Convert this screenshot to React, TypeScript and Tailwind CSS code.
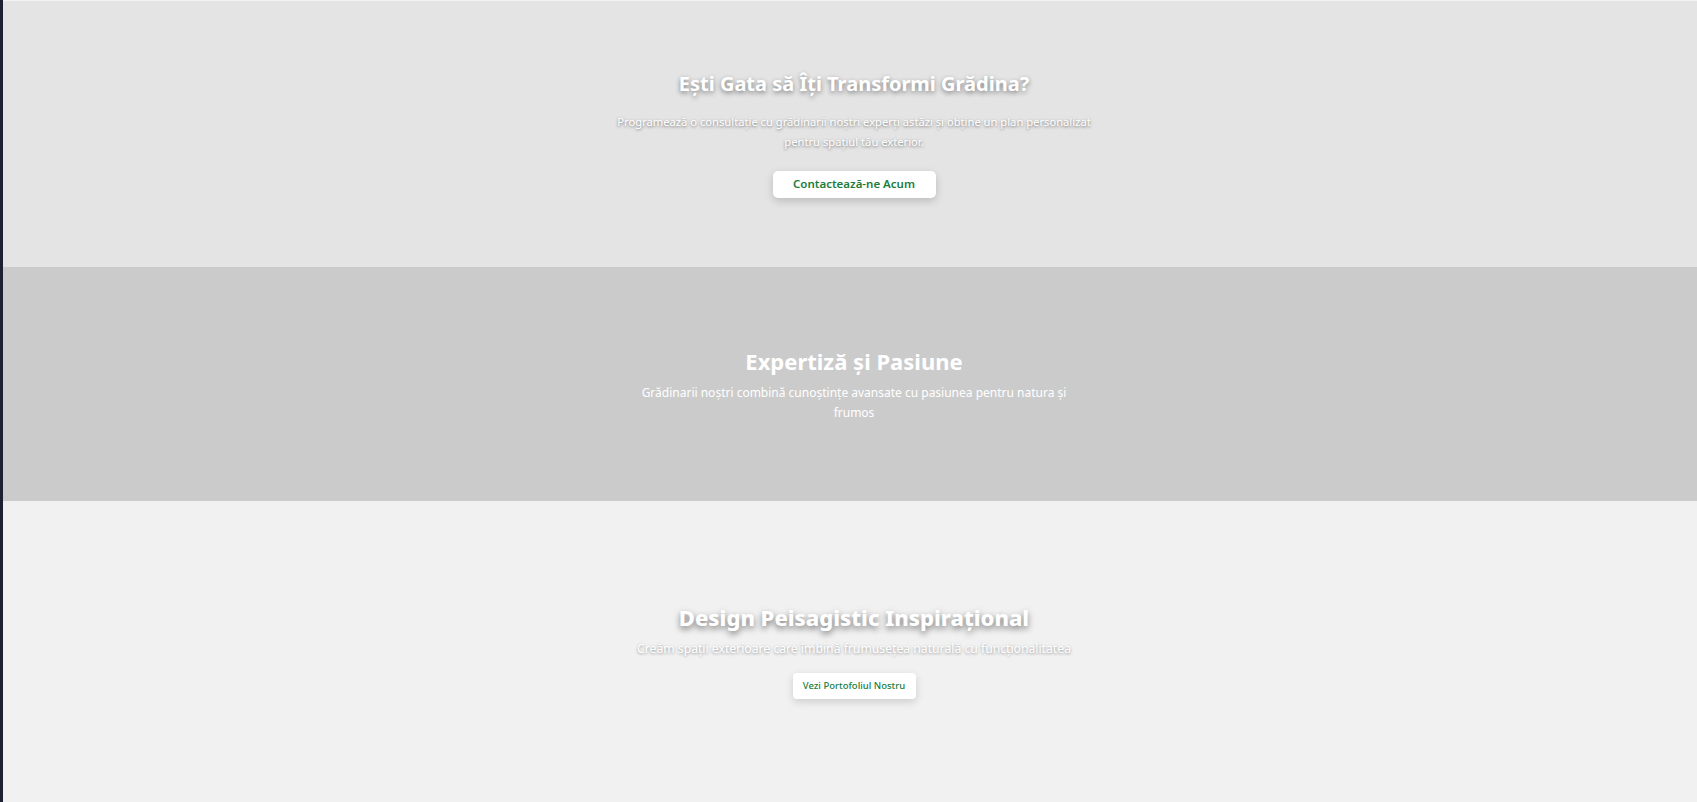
const font = { fontFamily: '"Noto Sans", "Open Sans", sans-serif' }

function CtaSection() {
  return (
    <section className="flex h-[267px] flex-col items-center justify-center border-t border-[#f4f4f4] bg-[#e4e4e4] pb-[3px] pl-2 text-center">
      <h2 className="text-[20px] font-bold leading-8 text-white [text-shadow:0_2px_5px_rgba(0,0,0,0.45)]">
        Ești Gata să Îți Transformi Grădina?
      </h2>
      <p className="mt-3 max-w-[490px] text-[11.2px] leading-5 text-white [text-shadow:0_1px_3px_rgba(0,0,0,0.5)]">
        Programează o consultație cu grădinarii noștri experți astăzi și obține un plan personalizat
        pentru spațiul tău exterior.
      </p>
      <button
        type="button"
        className="mt-[19px] h-[27px] w-[163px] rounded-[5px] bg-white text-[11.5px] font-semibold text-[#1a7d3c] shadow-[0_3px_8px_rgba(0,0,0,0.18)]"
      >
        Contactează-ne Acum
      </button>
    </section>
  )
}

function ExpertiseSection() {
  return (
    <section className="flex h-[234px] flex-col items-center justify-center bg-[#cbcbcb] pl-2 text-center">
      <h2 className="text-[22px] font-bold leading-8 text-white">Expertiză și Pasiune</h2>
      <p className="mt-1.5 max-w-[450px] text-[12px] leading-5 text-white">
        Grădinarii noștri combină cunoștințe avansate cu pasiunea pentru natura și frumos
      </p>
    </section>
  )
}

function PortfolioSection() {
  return (
    <section className="flex h-[301px] flex-col items-center justify-center bg-[#f1f1f1] pb-[3px] pl-2 text-center">
      <h2 className="text-[22px] font-extrabold leading-8 text-white [text-shadow:0_3px_6px_rgba(0,0,0,0.5)]">
        Design Peisagistic Inspirațional
      </h2>
      <p className="mt-1.5 text-[12.2px] leading-5 text-white [text-shadow:0_1px_3px_rgba(0,0,0,0.4)]">
        Creăm spații exterioare care îmbină frumusețea naturală cu funcționalitatea
      </p>
      <button
        type="button"
        className="mt-[14px] h-[26px] w-[123px] rounded-[4px] bg-white text-[9.5px] font-medium text-[#1a7d3c] shadow-[0_3px_8px_rgba(0,0,0,0.15)]"
      >
        Vezi Portofoliul Nostru
      </button>
    </section>
  )
}

export default function App() {
  return (
    <div className="flex h-[802px] w-full overflow-hidden bg-[#1c2230]" style={font}>
      <div className="w-[3px] shrink-0 bg-[#1c2230]" />
      <main className="flex flex-1 flex-col">
        <CtaSection />
        <ExpertiseSection />
        <PortfolioSection />
      </main>
    </div>
  )
}
